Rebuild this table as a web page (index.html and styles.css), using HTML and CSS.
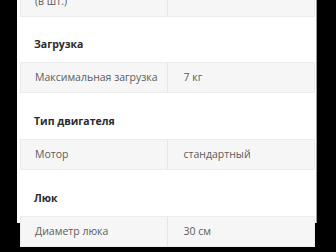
FILE: index.html
```html
<!DOCTYPE html>
<html lang="ru">
<head>
<meta charset="utf-8">
<link rel="stylesheet" href="styles.css">
</head>
<body>
<div class="sheet">
  <div class="specs">
    <div class="row">
      <div class="cell label two-line">Количество программ<br>(в шт.)</div>
      <div class="cell value"></div>
    </div>

    <div class="group">Загрузка</div>
    <div class="row">
      <div class="cell label">Максимальная загрузка</div>
      <div class="cell value">7 кг</div>
    </div>

    <div class="group">Тип двигателя</div>
    <div class="row">
      <div class="cell label">Мотор</div>
      <div class="cell value">стандартный</div>
    </div>

    <div class="group">Люк</div>
    <div class="row">
      <div class="cell label">Диаметр люка</div>
      <div class="cell value">30 см</div>
    </div>
  </div>
</div>
</body>
</html>
```

FILE: styles.css
```css
html, body {
  margin: 0;
  padding: 0;
  background: #000;
  height: 100%;
  overflow: hidden;
}

.sheet {
  margin-left: 17px;
  width: 300px;
  height: 100%;
  background: #fff;
  border-right: 1px solid #9a9a9a;
  box-sizing: border-box;
  padding: 0 1px 0 3px;
  font-family: "Open Sans", "Noto Sans", sans-serif;
  font-size: 10.5px;
}

.specs {
  margin-top: -29px;
}

.row {
  display: grid;
  grid-template-columns: minmax(0, 1fr) minmax(0, 1fr);
  background: #f6f6f6;
  border: 1px solid #ececec;
}

.cell {
  padding: 0 14px;
  height: 29px;
  line-height: 29px;
  color: #5c5c5c;
  white-space: nowrap;
}

.cell.label {
  border-right: 1px solid #e6e6e6;
}

.cell.value {
  padding-left: 16px;
}

.cell.two-line {
  height: auto;
  line-height: 14px;
  padding-top: 8px;
  padding-bottom: 8px;
}

.group {
  height: 46px;
  box-sizing: border-box;
  padding: 21px 0 0 14px;
  line-height: 14px;
  font-weight: 700;
  color: #2a2a2a;
}

.specs > .group:nth-child(2) {
  height: 45px;
  padding-top: 20px;
}
```
